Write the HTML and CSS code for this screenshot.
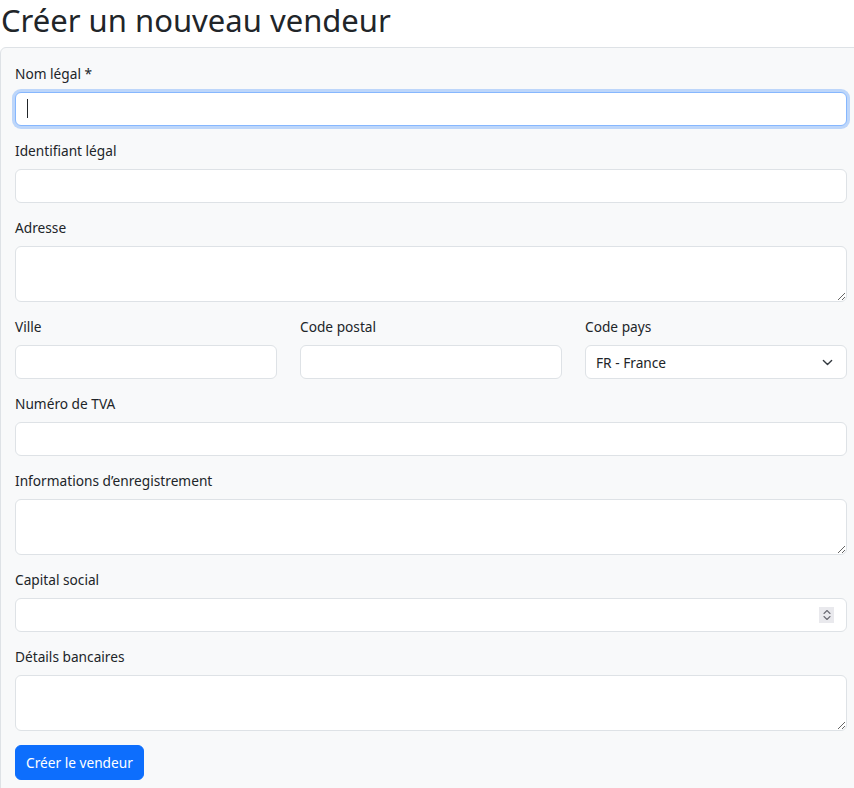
FILE: index.html
```html
<!DOCTYPE html>
<html lang="fr">
<head>
<meta charset="utf-8">
<title>Créer un nouveau vendeur</title>
<link rel="stylesheet" href="styles.css">
</head>
<body>
<h1 class="title">Créer un nouveau vendeur</h1>
<form class="card">
  <div class="group">
    <label class="label">Nom légal *</label>
    <div class="wrap">
      <input class="control focused" type="text">
      <span class="caret"></span>
    </div>
  </div>
  <div class="group">
    <label class="label">Identifiant légal</label>
    <input class="control" type="text">
  </div>
  <div class="group">
    <label class="label">Adresse</label>
    <textarea class="control area" rows="2"></textarea>
  </div>
  <div class="group row3">
    <div class="col">
      <label class="label">Ville</label>
      <input class="control" type="text">
    </div>
    <div class="col">
      <label class="label">Code postal</label>
      <input class="control" type="text">
    </div>
    <div class="col">
      <label class="label">Code pays</label>
      <div class="wrap">
        <select class="control select"><option>FR - France</option></select>
        <svg class="chev" width="11" height="11" viewBox="0 0 16 16"><path d="M2 5l6 6 6-6" fill="none" stroke="#343a40" stroke-width="2" stroke-linecap="round" stroke-linejoin="round"/></svg>
      </div>
    </div>
  </div>
  <div class="group">
    <label class="label">Numéro de TVA</label>
    <input class="control" type="text">
  </div>
  <div class="group">
    <label class="label">Informations d’enregistrement</label>
    <textarea class="control area" rows="2"></textarea>
  </div>
  <div class="group">
    <label class="label">Capital social</label>
    <div class="wrap">
      <input class="control number" type="number">
      <span class="spin">
        <svg width="8" height="12" viewBox="0 0 8 12"><path d="M1 4.5L4 1.5 7 4.5M1 7.5L4 10.5 7 7.5" fill="none" stroke="#6c6c74" stroke-width="1.1" stroke-linecap="round" stroke-linejoin="round"/></svg>
      </span>
    </div>
  </div>
  <div class="group">
    <label class="label">Détails bancaires</label>
    <textarea class="control area" rows="2"></textarea>
  </div>
  <button class="btn" type="button">Créer le vendeur</button>
</form>
</body>
</html>
```
FILE: styles.css
```css
html { font-size: 14px; }
body {
  margin: 0;
  font-family: "Noto Sans", "Open Sans", sans-serif;
  color: #212529;
  background: #fff;
  overflow: hidden;
}
.title {
  margin: 0 0 6px 0;
  font-size: 31px;
  font-weight: 400;
  line-height: 41px;
  padding-left: 1px;
}
.card {
  width: 862px;
  box-sizing: border-box;
  background: #f8f9fa;
  border: 1px solid #dee2e6;
  border-radius: 6px;
  padding: 15px 14px 20px 14px;
}
.group { margin-bottom: 14px; }
.label {
  display: block;
  font-size: 13.7px;
  line-height: 21px;
  margin-bottom: 8px;
}
.control {
  display: block;
  width: 100%;
  box-sizing: border-box;
  height: 34px;
  padding: 5px 10px;
  font-family: inherit;
  font-size: 13.7px;
  color: #212529;
  background: #fff;
  border: 1px solid #dee2e6;
  border-radius: 6px;
  outline: none;
}
.area { height: 56px; resize: vertical; }
.wrap { position: relative; }
.focused {
  border-color: #86b7fe;
  box-shadow: 0 0 0 3px rgba(13, 110, 253, 0.25);
}
.caret {
  position: absolute;
  left: 12px;
  top: 7px;
  width: 1px;
  height: 19px;
  background: #212529;
}
.row3 {
  display: grid;
  grid-template-columns: 1fr 1fr 1fr;
  column-gap: 23px;
}
.select {
  appearance: none;
  -webkit-appearance: none;
  padding-right: 32px;
}
.chev {
  position: absolute;
  right: 14px;
  top: 12px;
  pointer-events: none;
}
.number { -moz-appearance: textfield; }
.number::-webkit-inner-spin-button,
.number::-webkit-outer-spin-button { -webkit-appearance: none; margin: 0; }
.spin {
  position: absolute;
  right: 13px;
  top: 9px;
  width: 15px;
  height: 16px;
  background: #e9e9ed;
  display: flex;
  align-items: center;
  justify-content: center;
  pointer-events: none;
}
.btn {
  display: inline-block;
  height: 35px;
  padding: 0 10px;
  font-family: inherit;
  font-size: 13.7px;
  color: #fff;
  background: #0d6efd;
  border: 1px solid #0d6efd;
  border-radius: 6px;
}
```
